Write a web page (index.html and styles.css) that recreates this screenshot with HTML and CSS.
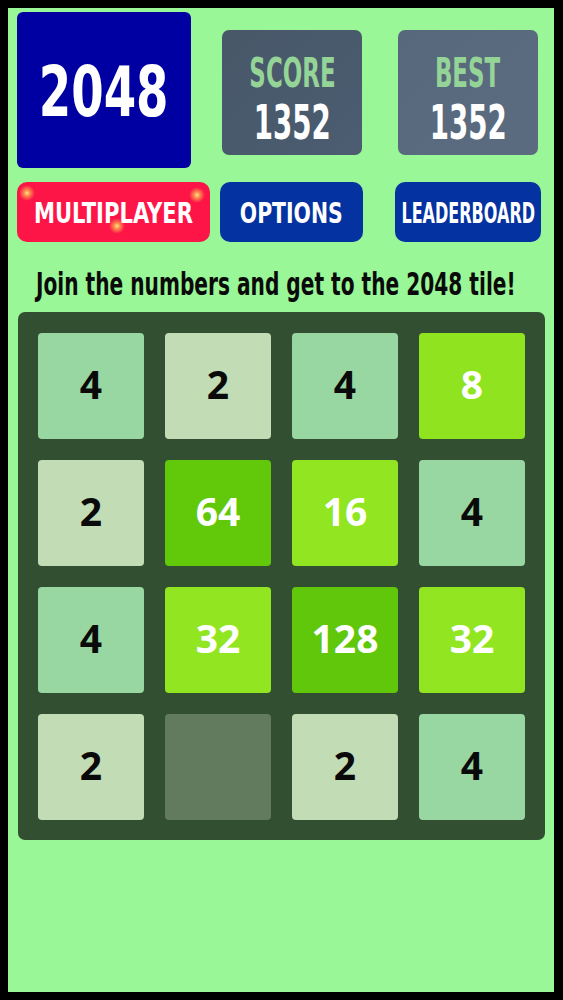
FILE: index.html
```html
<!DOCTYPE html>
<html>
<head>
<meta charset="utf-8">
<link rel="stylesheet" href="styles.css">
</head>
<body>
<div class="screen">
  <div class="header">
    <div class="logo"><span class="tall logo-text">2048</span></div>
    <div class="stat stat-score">
      <span class="tall stat-label">SCORE</span>
      <span class="tall stat-value">1352</span>
    </div>
    <div class="stat stat-best">
      <span class="tall stat-label">BEST</span>
      <span class="tall stat-value">1352</span>
    </div>
  </div>
  <div class="buttons">
    <div class="btn btn-multi">
      <span class="tall btn-text text-multi">MULTIPLAYER</span>
      <span class="spark spark-a"></span>
      <span class="spark spark-b"></span>
      <span class="spark spark-c"></span>
    </div>
    <div class="btn btn-options"><span class="tall btn-text text-options">OPTIONS</span></div>
    <div class="btn btn-leader"><span class="tall btn-text text-leader">LEADERBOARD</span></div>
  </div>
  <div class="intro"><span class="tall intro-text">Join the numbers and get to the 2048 tile!</span></div>
  <div class="board">
    <div class="tile t4">4</div>
    <div class="tile t2">2</div>
    <div class="tile t4">4</div>
    <div class="tile t8">8</div>
    <div class="tile t2">2</div>
    <div class="tile t64">64</div>
    <div class="tile t16">16</div>
    <div class="tile t4">4</div>
    <div class="tile t4">4</div>
    <div class="tile t32">32</div>
    <div class="tile t128">128</div>
    <div class="tile t32">32</div>
    <div class="tile t2">2</div>
    <div class="tile tempty"></div>
    <div class="tile t2">2</div>
    <div class="tile t4">4</div>
  </div>
</div>
</body>
</html>
```

FILE: styles.css
```css
html, body {
  margin: 0;
  padding: 0;
  background: #000;
}
body {
  width: 563px;
  height: 1000px;
  overflow: hidden;
}
.screen {
  margin: 8px 9px 0 8px;
  width: 546px;
  height: 984px;
  background: #99f797;
  display: flex;
  flex-direction: column;
}
.tall {
  display: inline-block;
  font-family: "DejaVu Sans Condensed", "DejaVu Sans", sans-serif;
  font-weight: 700;
  line-height: 1;
  white-space: nowrap;
}
.header {
  display: flex;
  align-items: flex-start;
  padding: 4px 0 0 9px;
  height: 156px;
}
.logo {
  width: 174px;
  height: 156px;
  background: #0000a2;
  border-radius: 6px;
  display: flex;
  align-items: center;
  justify-content: center;
}
.logo-text {
  color: #fff;
  font-size: 70px;
  transform: scale(0.74, 1.0);
  margin-top: 4px;
}
.stat {
  width: 140px;
  height: 125px;
  margin-top: 18px;
  border-radius: 7px;
  display: flex;
  flex-direction: column;
  align-items: center;
  justify-content: center;
  gap: 13px;
  padding-top: 14px;
  box-sizing: border-box;
}
.stat-score {
  margin-left: 31px;
  background: linear-gradient(135deg, #485869, #4c5c71);
}
.stat-best {
  margin-left: 36px;
  background: linear-gradient(135deg, #58687c, #5c6c80);
}
.stat-label {
  color: #95d497;
  font-size: 34px;
  transform: scale(0.75, 1.18);
}
.stat-value {
  color: #fff;
  font-size: 41px;
  transform: scale(0.75, 1.17);
}
.buttons {
  display: flex;
  margin-top: 14px;
  padding-left: 9px;
  height: 60px;
}
.btn {
  position: relative;
  height: 60px;
  border-radius: 10px;
  display: flex;
  align-items: center;
  justify-content: center;
}
.btn-text {
  color: #fff;
  font-size: 27px;
  margin-top: 2px;
}
.text-multi { transform: scale(0.87, 1.02); }
.text-options { transform: scale(0.84, 1.02); }
.text-leader { transform: scale(0.66, 1.02); }
.btn-multi {
  width: 193px;
  background: #fd1547;
}
.btn-options {
  width: 143px;
  margin-left: 10px;
  background: #0532a1;
}
.btn-leader {
  width: 146px;
  margin-left: 32px;
  background: #0532a1;
}
.spark {
  position: absolute;
  width: 16px;
  height: 16px;
  border-radius: 50%;
  background: radial-gradient(circle, rgba(255,230,140,1) 0%, rgba(255,170,80,0.8) 25%, rgba(255,120,80,0) 70%);
}
.spark-a { left: 2px; top: 3px; }
.spark-b { left: 172px; top: 5px; }
.spark-c { left: 92px; top: 36px; }
.intro {
  margin-top: 29px;
  height: 31px;
  display: flex;
  justify-content: center;
  padding-right: 10px;
}
.intro-text {
  color: #0a0a0a;
  font-size: 28px;
  transform: scale(0.8, 1.14);
}
.board {
  margin: 10px 0 0 10px;
  width: 487px;
  height: 487px;
  padding: 21px 20px 20px 20px;
  background: #334f32;
  border-radius: 7px;
  display: grid;
  grid-template-columns: repeat(4, 106px);
  grid-template-rows: repeat(4, 106px);
  column-gap: 21px;
  row-gap: 21px;
}
.tile {
  border-radius: 4px;
  display: flex;
  align-items: center;
  justify-content: center;
  font-family: "Open Sans", "Liberation Sans", sans-serif;
  font-weight: 700;
  font-size: 39px;
  line-height: 1;
  padding-bottom: 5px;
  box-sizing: border-box;
  color: #0a0a0a;
}
.t2 { background: #c2dcb5; }
.t4 { background: #98d7a1; }
.t8 { background: #90e41f; color: #fff; }
.t16 { background: #91e621; color: #fff; }
.t32 { background: #91e621; color: #fff; }
.t64 { background: #61c90a; color: #fff; }
.t128 { background: #60c70a; color: #fff; }
.tempty { background: #627b5f; }
```
